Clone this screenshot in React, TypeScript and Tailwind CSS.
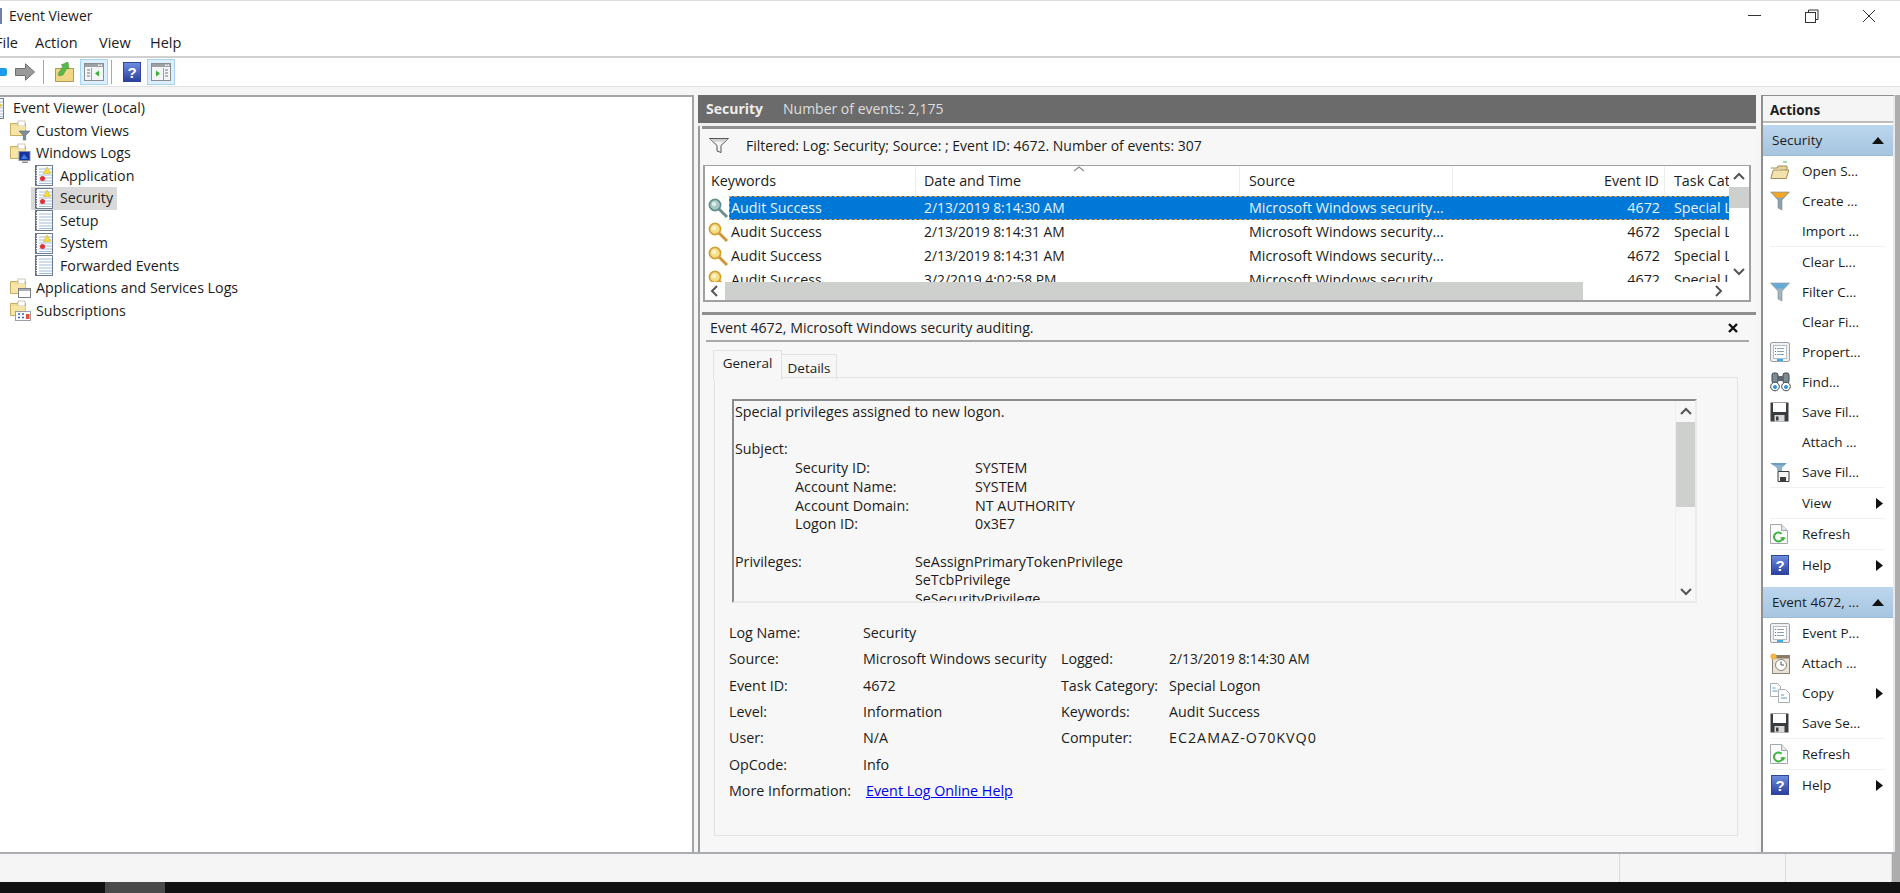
import React from "react";

const Help = ({ size = 20 }: { size?: number }) => (
  <svg width={size} height={size} viewBox="0 0 20 20" className="shrink-0">
    <defs>
      <linearGradient id="hb" x1="0" y1="0" x2="0" y2="1">
        <stop offset="0" stopColor="#6f8fe0" />
        <stop offset="1" stopColor="#2b3f9e" />
      </linearGradient>
    </defs>
    <rect x="1.5" y="0.5" width="17" height="19" fill="url(#hb)" stroke="#2f4596" />
    <text x="10" y="15.5" textAnchor="middle" fontSize="15" fontWeight="700" fill="#fff" fontFamily="Liberation Sans, sans-serif">?</text>
  </svg>
);

const Pane = ({ right = false }: { right?: boolean }) => (
  <svg width="20" height="18" viewBox="0 0 20 18">
    <rect x="0.5" y="0.5" width="19" height="17" fill="#f4f6f6" stroke="#8a8f92" />
    <rect x="1" y="1" width="18" height="3" fill="#9aa0a3" />
    <rect x="14" y="1.5" width="1.5" height="1.5" fill="#fff" />
    <rect x="16.5" y="1.5" width="1.5" height="1.5" fill="#fff" />
    {right ? (
      <>
        <path d="M5 7.5v6l4-3z" fill="#33b233" />
        <path d="M14 7h3M14 10h3M14 13h3" stroke="#6c7a90" strokeWidth="1.2" />
        <path d="M12.5 5v12" stroke="#9aa0a3" />
      </>
    ) : (
      <>
        <path d="M15 7.5v6l-4-3z" fill="#33b233" />
        <path d="M3 7h3M3 10h3M3 13h3" stroke="#6c7a90" strokeWidth="1.2" />
        <path d="M7.5 5v12" stroke="#9aa0a3" />
      </>
    )}
  </svg>
);

const Toggle = ({ right = false }: { right?: boolean }) => (
  <div className="w-[28px] h-[26px] flex items-center justify-center bg-[#dcedfb] border border-[#a6d4f7]">
    <Pane right={right} />
  </div>
);

const Sep = () => <div className="w-px h-[24px] bg-[#a8a8a8]" />;

const Folder = ({ o }: { o: "filter" | "mon" | "win" | "cal" }) => (
  <svg width="21" height="21" viewBox="0 0 21 21" className="shrink-0">
    <path d="M0.5 3.5h7l1 -2h6v2h1v12h-15z" fill="#f3dc96" stroke="#c9ad62" />
    <rect x="8" y="1" width="7" height="5" fill="#fff" stroke="#b8b29a" strokeWidth="0.7" />
    <rect x="1" y="6" width="14.5" height="9" fill="#f7e5a8" />
    {o === "filter" && <path d="M9 11h11l-4.3 4.5v4.5h-2.4v-4.5z" fill="#7f8f99" stroke="#59666e" strokeWidth="0.6" />}
    {o === "mon" && (
      <>
        <rect x="9" y="8.5" width="11" height="9" fill="#16329c" stroke="#8a8f98" />
        <path d="M11 16l3-5 4 5z" fill="#3a7fe0" />
        <path d="M12 18.5h6v1.5h-6z" fill="#8d9095" />
      </>
    )}
    {o === "win" && (
      <>
        <rect x="8.5" y="10.5" width="12" height="9" fill="#fff" stroke="#7d8185" />
        <rect x="9" y="11" width="11" height="2" fill="#aab0b5" />
      </>
    )}
    {o === "cal" && (
      <>
        <rect x="5.5" y="11.5" width="15" height="9" fill="#fff" stroke="#9a9fa6" />
        <path d="M8 14h2M12 14h2M8 17.5h2M12 17.5h2" stroke="#3563b5" strokeWidth="1.4" />
        <rect x="16" y="14" width="3.5" height="5" fill="#e84c3d" />
      </>
    )}
  </svg>
);

const LogIcon = ({ warn = false }: { warn?: boolean }) => (
  <svg width="19" height="21" viewBox="0 0 19 21" className="shrink-0">
    <rect x="0.5" y="0.5" width="17" height="20" fill="#fff" stroke="#6d7c92" />
    <path d="M1 1v19" stroke="#5a6a80" strokeWidth="2" strokeDasharray="1.5 1" />
    <path d="M4 4h13M4 7h13M4 10h13M4 13h13M4 16h13M4 18.5h13" stroke="#9fbbdc" />
    {warn && (
      <>
        <path d="M12 2l3.6 6.5h-7.2z" fill="#f6de3f" stroke="#d2b32a" strokeWidth="0.6" />
        <circle cx="7.5" cy="13.5" r="2.5" fill="#d8343a" />
      </>
    )}
  </svg>
);

const Key = ({ on = false }: { on?: boolean }) => {
  const a = on ? "#a9c9c6" : "#f7dd86";
  const b = on ? "#5f8f8c" : "#d3a032";
  return (
    <svg width="21" height="21" viewBox="0 0 21 21" className="shrink-0">
      <path d="M10.5 10.5l8.5 8.5" stroke={on ? "#6f8f8c" : "#d19638"} strokeWidth="3" />
      <circle cx="7" cy="7" r="5.6" fill={a} stroke={b} strokeWidth="1.7" />
      <circle cx="6" cy="6" r="2.3" fill={on ? "#dcecea" : "#fff3c0"} />
    </svg>
  );
};

const Funnel = ({ kind }: { kind: "orange" | "blue" | "outline" }) =>
  kind === "outline" ? (
    <svg width="20" height="16" viewBox="0 0 20 16" className="shrink-0">
      <path d="M0.5 0.5h19l-7.5 7v7l-4 -1.5v-5.5z" fill="#f2f2f2" stroke="#555" />
      <path d="M1 1h18l-3 2.5h-12z" fill="#cfcfcf" />
    </svg>
  ) : (
    <svg width="20" height="20" viewBox="0 0 20 20" className="shrink-0">
      <path d="M0.5 1h19l-7.5 8v10l-4 -2v-8z" fill={kind === "orange" ? "#8fa3ad" : "#9fb6c0"} stroke="#7a8c96" strokeWidth="0.6" />
      <path d="M1.5 1.5h17l-5 5h-7z" fill={kind === "orange" ? "#f4a623" : "#66a8d8"} />
    </svg>
  );

const OpenFolder = () => (
  <svg width="20" height="20" viewBox="0 0 20 20" className="shrink-0">
    <path d="M13 1h4" stroke="#7ed67e" strokeWidth="1.5" />
    <path d="M1 7h6l1-2h9v4" fill="#e8d291" stroke="#a08d55" />
    <path d="M0.8 17.5l2.5-8.5h15.5l-2.5 8.5z" fill="#f3e2ac" stroke="#a08d55" />
  </svg>
);

const Props = () => (
  <svg width="20" height="20" viewBox="0 0 20 20" className="shrink-0">
    <rect x="0.5" y="0.5" width="19" height="19" rx="1.5" fill="#eef0f2" stroke="#9ca2a8" />
    <rect x="3.5" y="3.5" width="13" height="13" fill="#fff" stroke="#b5bcc2" />
    <path d="M7 6.5h7M7 9.5h7M7 12.5h7" stroke="#8aa0bc" />
    <path d="M5 6.5h1M5 9.5h1M5 12.5h1" stroke="#3a78c0" />
    <rect x="7" y="17" width="6" height="2" fill="#35b0ea" />
  </svg>
);

const Binoc = () => (
  <svg width="21" height="20" viewBox="0 0 21 20" className="shrink-0">
    <rect x="2" y="1" width="6" height="10" rx="2" fill="#7e8a94" stroke="#3c444b" />
    <rect x="13" y="1" width="6" height="10" rx="2" fill="#7e8a94" stroke="#3c444b" />
    <rect x="8" y="4" width="5" height="5" fill="#5d666e" />
    <circle cx="5" cy="14.5" r="4.3" fill="#fff" stroke="#3c444b" />
    <circle cx="16" cy="14.5" r="4.3" fill="#fff" stroke="#3c444b" />
    <circle cx="5" cy="15" r="2" fill="#2f8fe0" />
    <circle cx="16" cy="15" r="2" fill="#2f8fe0" />
  </svg>
);

const Floppy = () => (
  <svg width="19" height="20" viewBox="0 0 19 20" className="shrink-0">
    <path d="M0.5 0.5h18v19h-18z" fill="#3a3d40" />
    <rect x="3" y="1" width="13" height="9" fill="#fff" />
    <rect x="4.5" y="13" width="10" height="6.5" fill="#d8d8d8" />
    <rect x="6" y="14.5" width="2.5" height="4" fill="#3a3d40" />
  </svg>
);

const FunnelSave = () => (
  <svg width="20" height="20" viewBox="0 0 20 20" className="shrink-0">
    <path d="M0 1h17l-5 5v3h-5v-3z" fill="#8fb3c8" />
    <path d="M1 1h15l-2 2h-11z" fill="#66a0c8" />
    <path d="M8 9.5h11v10h-11z" fill="#f4f4f4" stroke="#3a3d40" />
    <rect x="10" y="15" width="6" height="4.5" fill="#3a3d40" />
  </svg>
);

const Refresh = () => (
  <svg width="18" height="20" viewBox="0 0 18 20" className="shrink-0">
    <path d="M0.5 0.5h11l6 6v13h-17z" fill="#fbfbfb" stroke="#a5a9ac" />
    <path d="M11.5 0.5v6h6" fill="#e6e6e6" stroke="#a5a9ac" />
    <path d="M13 13a4.5 4.5 0 1 1-1.4-3.3" fill="none" stroke="#3fb53f" strokeWidth="2" />
    <path d="M10 13.5h6l-3 3.5z" fill="#3fb53f" />
  </svg>
);

const Clock = () => (
  <svg width="21" height="21" viewBox="0 0 21 21" className="shrink-0">
    <rect x="2.5" y="2.5" width="17" height="18" fill="#e8e2d6" stroke="#8b8478" />
    <rect x="2.5" y="2.5" width="17" height="3" fill="#8b7a68" />
    <circle cx="11" cy="12" r="5.5" fill="#fff" stroke="#8b8478" />
    <path d="M11 8.5v3.5h3" fill="none" stroke="#555" />
    <circle cx="3.5" cy="3.5" r="3" fill="#f6b63a" />
  </svg>
);

const Copy = () => (
  <svg width="20" height="20" viewBox="0 0 20 20" className="shrink-0">
    <path d="M0.5 0.5h7l3 3v10h-10z" fill="#fff" stroke="#a9aeb3" />
    <path d="M8.5 6.5h7l4 4v9h-11z" fill="#fff" stroke="#a9aeb3" />
    <path d="M2.5 5h3M2.5 8h5" stroke="#5d94d0" />
    <path d="M11 12h3M11 15h6" stroke="#5d94d0" />
  </svg>
);

const Chev = ({ d }: { d: "u" | "d" | "l" | "r" }) => {
  const p = { u: "M1 8l5-5 5 5", d: "M1 4l5 5 5-5", l: "M8 1L3 6l5 5", r: "M4 1l5 5-5 5" }[d];
  return (
    <svg width="12" height="12" viewBox="0 0 12 12" className="shrink-0">
      <path d={p} fill="none" stroke="#555" strokeWidth="2" />
    </svg>
  );
};

const TreeRow = ({ icon, label, pl, sel, w }: { icon?: React.ReactNode; label: string; pl: string; sel?: boolean; w?: string }) => (
  <div className={`h-[22.5px] flex items-center ${pl}`}>
    {sel ? (
      <div className="flex items-center h-[23px] w-[86px] bg-[#d9d9d9] pl-[4px] -ml-[4px]">
        {icon}
        <span className="ml-[6px]">{label}</span>
      </div>
    ) : (
      <>
        {icon}
        <span className={w ?? "ml-[6px]"}>{label}</span>
      </>
    )}
  </div>
);

const ARow = ({ icon, label, arrow }: { icon?: React.ReactNode; label: string; arrow?: boolean }) => (
  <div className="h-[30px] flex items-center">
    <div className="w-[39px] pl-[7px] flex items-center shrink-0">{icon}</div>
    <span className="whitespace-nowrap">{label}</span>
    {arrow && (
      <svg width="7" height="11" viewBox="0 0 7 11" className="ml-auto mr-[10px]">
        <path d="M0 0l7 5.5L0 11z" fill="#111" />
      </svg>
    )}
  </div>
);

const ASep = () => <div className="h-px bg-[#f0f0f0] ml-[7px] mr-[8px]" />;

const AHead = ({ label }: { label: string }) => (
  <div className="h-[31px] flex items-center pl-[9px] bg-gradient-to-b from-[#bcd6ee] to-[#a7c5df] border-b border-[#9fbcd6]">
    <span className="whitespace-nowrap">{label}</span>
    <svg width="12" height="7" viewBox="0 0 12 7" className="ml-auto mr-[9px]">
      <path d="M0 7L6 0l6 7z" fill="#111" />
    </svg>
  </div>
);

const EvRow = ({ date, on }: { date: string; on?: boolean }) => (
  <div className="h-[24px] flex items-center shrink-0">
    <div className="w-[24px] pl-[3px] flex items-center shrink-0">
      <Key on={on} />
    </div>
    <div
      className={`flex-1 h-[24px] flex items-center ${
        on ? "bg-[#0078d7] text-[#e8f2fb] border border-dashed border-[#e8a050]" : "border border-transparent"
      }`}
    >
      <div className="w-[186px] pl-[1px] shrink-0">Audit Success</div>
      <div className="w-[324px] pl-[8px] shrink-0 text-[13.85px]">{date}</div>
      <div className="w-[213px] pl-[9px] shrink-0 whitespace-nowrap">Microsoft Windows security...</div>
      <div className="w-[212px] pr-[5px] shrink-0 text-right">4672</div>
      <div className="flex-1 pl-[9px] overflow-hidden whitespace-nowrap">Special Logon</div>
    </div>
  </div>
);

const details: [string, string, string?, string?][] = [
  ["Log Name:", "Security"],
  ["Source:", "Microsoft Windows security", "Logged:", "2/13/2019 8:14:30 AM"],
  ["Event ID:", "4672", "Task Category:", "Special Logon"],
  ["Level:", "Information", "Keywords:", "Audit Success"],
  ["User:", "N/A", "Computer:", "EC2AMAZ-O70KVQ0"],
  ["OpCode:", "Info"],
];

const msg =
  "Special privileges assigned to new logon.\n\nSubject:\n\tSecurity ID:\t\tSYSTEM\n\tAccount Name:\t\tSYSTEM\n\tAccount Domain:\t\tNT AUTHORITY\n\tLogon ID:\t\t0x3E7\n\nPrivileges:\t\tSeAssignPrimaryTokenPrivilege\n\t\t\tSeTcbPrivilege\n\t\t\tSeSecurityPrivilege\n\t\t\tSeTakeOwnershipPrivilege";

export default function App() {
  return (
    <div className="w-[1900px] h-[893px] overflow-hidden flex flex-col bg-white text-[#1c1c1c] font-['Open_Sans',sans-serif] text-[13.5px] leading-[18px]">
      {/* title */}
      <div className="h-[30px] shrink-0 border-t border-[#dcdcdc] flex items-center">
        <div className="w-[2px] h-[16px] bg-[#6f83a0] mr-[7px]" />
        <span className="text-[13.9px]">Event Viewer</span>
        <div className="ml-auto flex pr-[3px]">
          <div className="w-[57px] h-[24px] flex items-center justify-center">
            <div className="w-[13px] h-px bg-[#333]" />
          </div>
          <div className="w-[57px] h-[24px] flex items-center justify-center">
            <svg width="14" height="14" viewBox="0 0 14 14">
              <path d="M3.5 3V1h9.5v9.5h-2.5" fill="none" stroke="#333" />
              <rect x="0.5" y="3.5" width="10" height="10" fill="none" stroke="#333" />
            </svg>
          </div>
          <div className="w-[57px] h-[24px] flex items-center justify-center">
            <svg width="14" height="14" viewBox="0 0 14 14">
              <path d="M1 1l12 12M13 1L1 13" stroke="#333" strokeWidth="1" />
            </svg>
          </div>
        </div>
      </div>
      {/* menu */}
      <div className="h-[28px] shrink-0 flex items-center border-b-2 border-[#d0d0d0] -ml-[5px] text-[14.5px]">
        <div className="w-[40px]">File</div>
        <div className="w-[64px]">Action</div>
        <div className="w-[51px]">View</div>
        <div>Help</div>
      </div>
      {/* toolbar */}
      <div className="h-[29px] shrink-0 flex items-center border-b border-[#e2e2e2]">
        <div className="w-[7px] h-[8px] bg-[#1e9be8] rounded-r-[2px]" />
        <svg width="20" height="18" viewBox="0 0 20 18" className="ml-[8px]">
          <path d="M0.5 5.5h10V0.8L19.5 9l-9 8.2v-4.7h-10z" fill="#9a9a9a" stroke="#6f6f6f" />
        </svg>
        <div className="ml-[8px]"><Sep /></div>
        <svg width="19" height="20" viewBox="0 0 19 20" className="ml-[11px]">
          <path d="M0.5 6.5h18v13h-18z" fill="#f0d787" stroke="#b09a55" />
          <path d="M3 12l5-8-2-1 7-3 1 7-2-1-4 7-4 1z" fill="#58b848" stroke="#3c8f30" strokeWidth="0.5" />
        </svg>
        <div className="ml-[6px]"><Toggle /></div>
        <div className="ml-[3px]"><Sep /></div>
        <div className="ml-[10px]"><Help size={20} /></div>
        <div className="ml-[5px]"><Toggle right /></div>
      </div>
      <div className="h-[8px] shrink-0 bg-[#f5f5f5]" />

      {/* body */}
      <div className="flex h-[759px] shrink-0 bg-[#f5f5f5] border-b-2 border-[#a9adb1]">
        {/* tree */}
        <div className="w-[694px] shrink-0 bg-white border-t-2 border-r-2 border-[#a2a6aa] text-[14.25px]">
          <div className="h-[22.5px] flex items-center">
            <div className="w-[5px] h-[21px] overflow-hidden shrink-0">
              <div className="-ml-[14px]"><LogIcon warn /></div>
            </div>
            <span className="ml-[8px]">Event Viewer (Local)</span>
          </div>
          <TreeRow pl="pl-[10px]" icon={<Folder o="filter" />} label="Custom Views" w="ml-[5px]" />
          <TreeRow pl="pl-[10px]" icon={<Folder o="mon" />} label="Windows Logs" w="ml-[5px]" />
          <TreeRow pl="pl-[35px]" icon={<LogIcon warn />} label="Application" />
          <TreeRow pl="pl-[35px]" icon={<LogIcon warn />} label="Security" sel />
          <TreeRow pl="pl-[35px]" icon={<LogIcon />} label="Setup" />
          <TreeRow pl="pl-[35px]" icon={<LogIcon warn />} label="System" />
          <TreeRow pl="pl-[35px]" icon={<LogIcon />} label="Forwarded Events" />
          <TreeRow pl="pl-[10px]" icon={<Folder o="win" />} label="Applications and Services Logs" w="ml-[5px]" />
          <TreeRow pl="pl-[10px]" icon={<Folder o="cal" />} label="Subscriptions" w="ml-[5px]" />
        </div>
        <div className="w-[4px] shrink-0" />

        {/* center */}
        <div className="w-[1058px] shrink-0 flex flex-col">
          <div className="h-[28px] shrink-0 bg-[#6b6b6b] flex items-center pl-[8px] text-[#ededed] text-[14px]">
            <span className="font-bold w-[77px]">Security</span>
            <span className="text-[#dedede]">Number of events: 2,175</span>
          </div>
          <div className="h-[3px] shrink-0 bg-[#efefef]" />
          <div className="flex-1 flex flex-col border-l-2 border-[#9a9a9a] pl-[2px] bg-[#f7f7f7] min-h-0">
            {/* filter */}
            <div className="h-[39px] shrink-0 border-t-[3px] border-[#8f8f8f] flex items-center pl-[7px] pb-[2px] text-[14px]">
              <Funnel kind="outline" />
              <span className="ml-[17px]">Filtered: Log: Security; Source: ; Event ID: 4672. Number of events: 307</span>
            </div>
            {/* table */}
            <div className="relative w-[1048px] h-[137px] ml-px shrink-0 bg-white border-t border-x-2 border-b-2 border-x-[#a0a0a0] border-t-[#a0a0a0] border-b-[#a0a0a0] flex flex-col text-[14.3px]">
              <div className="flex h-[116px] shrink-0">
                <div className="w-[1024px] shrink-0 flex flex-col">
                  <div className="h-[30px] shrink-0 flex items-center">
                    <div className="w-[211px] pl-[6px] border-r border-[#ececec] h-full flex items-center">Keywords</div>
                    <div className="w-[324px] pl-[8px] border-r border-[#ececec] h-full flex items-center">Date and Time</div>
                    <div className="w-[213px] pl-[9px] border-r border-[#ececec] h-full flex items-center">Source</div>
                    <div className="w-[212px] pr-[5px] border-r border-[#ececec] h-full flex items-center justify-end">Event ID</div>
                    <div className="flex-1 pl-[9px] h-full flex items-center overflow-hidden whitespace-nowrap">Task Cat</div>
                  </div>
                  <div className="h-[86px] overflow-hidden flex flex-col">
                    <EvRow date="2/13/2019 8:14:30 AM" on />
                    <EvRow date="2/13/2019 8:14:31 AM" />
                    <EvRow date="2/13/2019 8:14:31 AM" />
                    <EvRow date="3/2/2019 4:02:58 PM" />
                  </div>
                </div>
                <div className="w-[20px] shrink-0 flex flex-col items-center">
                  <div className="h-[21px] flex items-center"><Chev d="u" /></div>
                  <div className="h-[21px] w-full bg-[#cdd0cc]" />
                  <div className="flex-1" />
                  <div className="h-[22px] flex items-center"><Chev d="d" /></div>
                </div>
              </div>
              <div className="h-[18px] shrink-0 flex">
                <div className="w-[20px] flex items-center justify-center shrink-0"><Chev d="l" /></div>
                <div className="w-[858px] bg-[#cdd0cc] shrink-0" />
                <div className="flex-1" />
                <div className="w-[40px] flex items-center pl-[3px] shrink-0"><Chev d="r" /></div>
              </div>
              <svg width="12" height="6" viewBox="0 0 12 6" className="absolute left-[368px] top-[0px]">
                <path d="M1 5l5-4 5 4" fill="none" stroke="#8a8a8a" strokeWidth="1.2" />
              </svg>
            </div>
            {/* event pane */}
            <div className="mt-[10px] flex-1 min-h-0 border-t-[3px] border-[#8f8f8f] flex flex-col">
              <div className="h-[25px] shrink-0 flex items-center pl-[8px] pr-[18px] justify-between text-[14.2px]">
                <span>Event 4672, Microsoft Windows security auditing.</span>
                <svg width="10" height="10" viewBox="0 0 10 10">
                  <path d="M1 1l8 8M9 1L1 9" stroke="#111" strokeWidth="2.4" />
                </svg>
              </div>
              <div className="h-[2px] shrink-0 bg-[#a9a9a9] ml-[4px] mr-[7px]" />
              <div className="pl-[11px] pt-[8px] flex items-end shrink-0 relative z-10 -mb-[3px]">
                <div className="w-[69px] h-[30px] bg-[#f7f7f7] border-t border-x border-[#e2e2e2] flex items-center justify-center pb-[6px]">General</div>
                <div className="w-[55px] h-[26px] border-t border-r border-[#e2e2e2] flex items-center justify-center">Details</div>
              </div>
              <div className="ml-[12px] w-[1024px] h-[459px] shrink-0 border border-[#e2e2e2] pt-[21px] pl-[17px] text-[14.3px]">
                <div className="w-[965px] h-[204px] flex border-t-2 border-l-2 border-[#8a8a8a] border-r-2 border-b-2 border-r-[#ebebeb] border-b-[#ebebeb]">
                  <pre className="flex-1 overflow-hidden pl-px pt-[2px] font-['Open_Sans',sans-serif] text-[14.3px] leading-[18.7px] [tab-size:60px] whitespace-pre">{msg}</pre>
                  <div className="w-[20px] shrink-0 flex flex-col items-center border-l border-[#eeeeee]">
                    <div className="h-[21px] flex items-center"><Chev d="u" /></div>
                    <div className="h-[85px] w-[19px] bg-[#cdd0cc]" />
                    <div className="flex-1" />
                    <div className="h-[21px] flex items-center"><Chev d="d" /></div>
                  </div>
                </div>
                <div className="mt-[17px] -ml-[3px]">
                  {details.map(([a, b, c, d]) => (
                    <div key={a} className="h-[26.3px] flex items-center">
                      <div className="w-[134px] shrink-0">{a}</div>
                      <div className="w-[198px] shrink-0 whitespace-nowrap">{b}</div>
                      <div className="w-[108px] shrink-0 whitespace-nowrap">{c}</div>
                      <div
                        className={`whitespace-nowrap ${
                          c === "Computer:" ? "tracking-[1px]" : c === "Logged:" ? "text-[13.85px]" : ""
                        }`}
                      >
                        {d}
                      </div>
                    </div>
                  ))}
                  <div className="h-[26.3px] flex items-center">
                    <div className="w-[137px] shrink-0 whitespace-nowrap">More Information:</div>
                    <a className="text-[#0000ee] underline">Event Log Online Help</a>
                  </div>
                </div>
              </div>
            </div>
          </div>
        </div>
        <div className="w-[5px] shrink-0" />

        {/* actions */}
        <div className="w-[134px] shrink-0 bg-white border-t border-l-2 border-r-2 border-[#8f8f8f] border-r-[#e8e8e8] flex flex-col">
          <div className="h-[27px] shrink-0 bg-[#f5f5f5] flex items-center pl-[7px] pt-[2px] font-bold border-b-2 border-[#bdbdbd]">Actions</div>
          <div className="h-[2px] shrink-0" />
          <AHead label="Security" />
          <ARow icon={<OpenFolder />} label="Open S..." />
          <ARow icon={<Funnel kind="orange" />} label="Create ..." />
          <ARow label="Import ..." />
          <ASep />
          <ARow label="Clear L..." />
          <ARow icon={<Funnel kind="blue" />} label="Filter C..." />
          <ARow label="Clear Fi..." />
          <ARow icon={<Props />} label="Propert..." />
          <ARow icon={<Binoc />} label="Find..." />
          <ARow icon={<Floppy />} label="Save Fil..." />
          <ARow label="Attach ..." />
          <ARow icon={<FunnelSave />} label="Save Fil..." />
          <ASep />
          <ARow label="View" arrow />
          <ASep />
          <ARow icon={<Refresh />} label="Refresh" />
          <ASep />
          <ARow icon={<Help />} label="Help" arrow />
          <div className="h-[7px] shrink-0" />
          <AHead label="Event 4672, ..." />
          <ARow icon={<Props />} label="Event P..." />
          <ARow icon={<Clock />} label="Attach ..." />
          <ARow icon={<Copy />} label="Copy" arrow />
          <ARow icon={<Floppy />} label="Save Se..." />
          <ASep />
          <ARow icon={<Refresh />} label="Refresh" />
          <ASep />
          <ARow icon={<Help />} label="Help" arrow />
        </div>
        <div className="flex-1 bg-[#adadad]" />
      </div>

      {/* status */}
      <div className="h-[28px] shrink-0 bg-[#f5f5f5] flex">
        <div className="w-[1620px] shrink-0 border-r border-[#dcdcdc]" />
        <div className="w-[166px] shrink-0 border-r border-[#dcdcdc]" />
        <div className="w-[106px] shrink-0 border-r border-[#dcdcdc]" />
        <div className="flex-1 bg-[#adadad]" />
      </div>
      {/* taskbar */}
      <div className="flex-1 bg-[#111111] flex">
        <div className="ml-[105px] w-[60px] bg-[#4a4a4a]" />
      </div>
    </div>
  );
}
